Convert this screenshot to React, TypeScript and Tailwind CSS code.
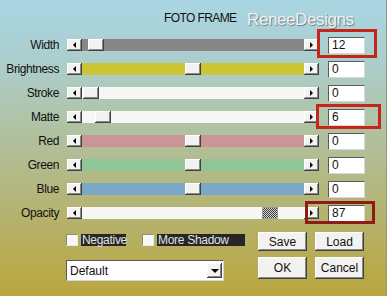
import React from "react";

type SliderRow = {
  label: string;
  track: string;
  thumb: string;
  checker?: boolean;
  value: string;
};

const rows: SliderRow[] = [
  { label: "Width", track: "bg-[#868686]", thumb: "left-[6px]", value: "12" },
  { label: "Brightness", track: "bg-[#cdc634]", thumb: "left-[103px]", value: "0" },
  { label: "Stroke", track: "bg-[#f6f6f4]", thumb: "left-[1px]", value: "0" },
  { label: "Matte", track: "bg-[#f6f6f4]", thumb: "left-[13px]", value: "6" },
  { label: "Red", track: "bg-[#cc9595]", thumb: "left-[103px]", value: "0" },
  { label: "Green", track: "bg-[#90c596]", thumb: "left-[103px]", value: "0" },
  { label: "Blue", track: "bg-[#7ba7c9]", thumb: "left-[103px]", value: "0" },
  { label: "Opacity", track: "bg-[#f6f6f4]", thumb: "left-[180px]", checker: true, value: "87" },
];

const raised =
  "bg-[#f2f2f0] shadow-[inset_-1px_-1px_#404040,inset_1px_1px_#ffffff,inset_-2px_-2px_#8a8a8a]";
const sunken = "bg-white border border-t-[#5a5a5a] border-l-[#5a5a5a] border-r-[#d8d8d8] border-b-[#d8d8d8]";

function ArrowButton({ dir }: { dir: "left" | "right" }) {
  return (
    <div className={`w-[15px] h-[12px] flex items-center justify-center ${raised}`}>
      {dir === "left" ? (
        <div className="w-0 h-0 border-y-[3px] border-y-transparent border-r-[3px] border-r-black" />
      ) : (
        <div className="w-0 h-0 border-y-[3px] border-y-transparent border-l-[3px] border-l-black" />
      )}
    </div>
  );
}

function Row({ row }: { row: SliderRow }) {
  return (
    <div className="h-[24px] flex items-center">
      <div className="w-[59px] text-right text-[12px] tracking-[-0.4px] leading-none text-[#111]">
        {row.label}
      </div>
      <div className="ml-[8px] flex items-center">
        <ArrowButton dir="left" />
        <div className={`relative w-[222px] h-[12px] ${row.track}`}>
          <div
            className={`absolute top-0 h-[12px] w-[16px] ${row.thumb} ${
              row.checker
                ? "bg-[repeating-conic-gradient(#3a3a3a_0_25%,#d8d8d8_0_50%)] bg-[length:2px_2px] border border-[#9a9a9a]"
                : raised
            }`}
          />
        </div>
        <ArrowButton dir="right" />
      </div>
      <div className={`ml-[9px] w-[37px] h-[17px] flex items-center pl-[3px] text-[12px] leading-none text-[#111] ${sunken}`}>
        {row.value}
      </div>
    </div>
  );
}

function Check({ label, width }: { label: string; width: string }) {
  return (
    <div className="flex items-center">
      <div className="w-[12px] h-[12px] bg-[#f8f8f8] border border-t-[#8a8a8a] border-l-[#8a8a8a] border-r-[#e8e8e8] border-b-[#e8e8e8]" />
      <div className={`ml-[3px] h-[12px] ${width} bg-[#262626] text-[#e2e2e2] text-[12px] tracking-[-0.3px] leading-[12px] pl-[1px] whitespace-nowrap`}>
        {label}
      </div>
    </div>
  );
}

function Btn({ label, h }: { label: string; h: string }) {
  return (
    <div className={`w-[49px] ${h} flex items-center justify-center text-[12px] text-[#111] ${raised}`}>
      {label}
    </div>
  );
}

export default function App() {
  return (
    <div
      className="relative w-[387px] h-[296px] overflow-hidden bg-[linear-gradient(180deg,#a9d6e3_0%,#abcfd0_18%,#afc4a9_40%,#b4b67c_65%,#b9a63e_100%)] border-r border-[#8f9a80]"
      style={{ fontFamily: '"Liberation Sans", Arial, sans-serif' }}
    >
      <div className="h-[33px] pl-[164px] pt-[12px] text-[12px] tracking-[-0.6px] leading-none text-[#111]">
        FOTO FRAME
      </div>

      <div className="absolute left-[247px] top-[7px] text-[17px] tracking-[-0.4px] text-[#eef2f3] [text-shadow:1px_1px_1px_#6d7c80]">
        ReneeDesigns
      </div>

      <div className="flex flex-col">
        {rows.map((r) => (
          <Row key={r.label} row={r} />
        ))}
      </div>

      <div className="flex pl-[66px] pt-[7px]">
        <div className="w-[180px] flex flex-col">
          <div className="flex items-center gap-[16px] mt-[2px]">
            <Check label="Negative" width="w-[45px]" />
            <Check label="More Shadow" width="w-[88px]" />
          </div>
          <div className={`mt-[14px] w-[158px] h-[21px] flex items-center justify-between pl-[3px] pr-[1px] ${sunken}`}>
            <span className="text-[12px] text-[#111] leading-none">Default</span>
            <div className={`w-[15px] h-[15px] flex items-center justify-center ${raised}`}>
              <div className="w-0 h-0 border-x-[4px] border-x-transparent border-t-[4px] border-t-black" />
            </div>
          </div>
        </div>
        <div className="ml-[12px] flex flex-col gap-[6px]">
          <div className="flex gap-[8px]">
            <Btn label="Save" h="h-[19px]" />
            <Btn label="Load" h="h-[19px]" />
          </div>
          <div className="flex gap-[8px]">
            <Btn label="OK" h="h-[22px]" />
            <Btn label="Cancel" h="h-[22px]" />
          </div>
        </div>
      </div>

      <div className="absolute left-[317px] top-[29px] w-[60px] h-[29px] border-[3px] border-[#c4261c]" />
      <div className="absolute left-[316px] top-[104px] w-[65px] h-[25px] border-[3px] border-[#c4261c]" />
      <div className="absolute left-[305px] top-[201px] w-[70px] h-[23px] border-[3px] border-[#8e1b16]" />
    </div>
  );
}
